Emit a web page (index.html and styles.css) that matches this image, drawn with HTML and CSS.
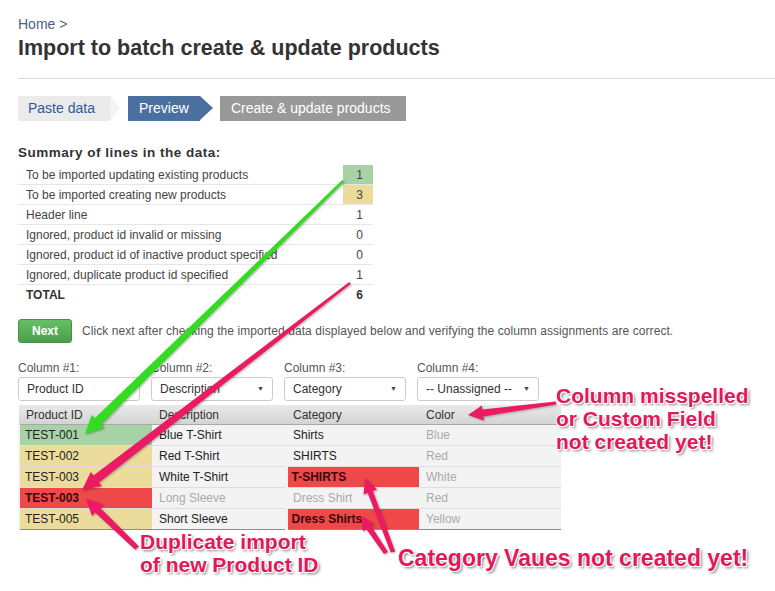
FILE: index.html
```html
<!DOCTYPE html>
<html lang="en">
<head>
    <meta charset="UTF-8">
    <meta name="viewport" content="width=device-width, initial-scale=1.0">
    <title>Import to batch create &amp; update products</title>
    <link rel="stylesheet" href="styles.css">
</head>
<body>
    <div class="page">
        <div class="crumb">Home &gt;</div>
        <h1>Import to batch create &amp; update products</h1>
        <hr>

        <div class="steps">
            <div class="step stepDone">Paste data</div>
            <div class="step stepCurrent">Preview</div>
            <div class="step stepNext">Create &amp; update products</div>
        </div>

        <h2>Summary of lines in the data:</h2>
        <table class="summary">
            <tr><td>To be imported updating existing products</td><td class="num okCell">1</td></tr>
            <tr><td>To be imported creating new products</td><td class="num newCell">3</td></tr>
            <tr><td>Header line</td><td class="num">1</td></tr>
            <tr><td>Ignored, product id invalid or missing</td><td class="num">0</td></tr>
            <tr><td>Ignored, product id of inactive product specified</td><td class="num">0</td></tr>
            <tr><td>Ignored, duplicate product id specified</td><td class="num">1</td></tr>
            <tr class="total"><td>TOTAL</td><td class="num">6</td></tr>
        </table>

        <div class="actions">
            <button class="nextBtn">Next</button>
            <span class="hint">Click next after checking the imported data displayed below and verifying the column assignments are correct.</span>
        </div>

        <div class="columns">
            <div class="colPick">
                <label>Column #1:</label>
                <div class="select">Product ID</div>
            </div>
            <div class="colPick">
                <label>Column #2:</label>
                <div class="select withCaret">Description</div>
            </div>
            <div class="colPick">
                <label>Column #3:</label>
                <div class="select withCaret">Category</div>
            </div>
            <div class="colPick">
                <label>Column #4:</label>
                <div class="select withCaret">-- Unassigned --</div>
            </div>
        </div>

        <table class="preview">
            <thead>
                <tr><th>Product ID</th><th>Description</th><th>Category</th><th>Color</th></tr>
            </thead>
            <tbody>
                <tr><td class="okCell">TEST-001</td><td>Blue T-Shirt</td><td>Shirts</td><td class="muted">Blue</td></tr>
                <tr><td class="newCell">TEST-002</td><td>Red T-Shirt</td><td>SHIRTS</td><td class="muted">Red</td></tr>
                <tr><td class="newCell">TEST-003</td><td>White T-Shirt</td><td class="badCell">T-SHIRTS</td><td class="muted">White</td></tr>
                <tr><td class="badCell">TEST-003</td><td class="muted">Long Sleeve</td><td class="muted">Dress Shirt</td><td class="muted">Red</td></tr>
                <tr><td class="newCell">TEST-005</td><td>Short Sleeve</td><td class="badCell">Dress Shirts</td><td class="muted">Yellow</td></tr>
            </tbody>
        </table>
    </div>

    <!-- annotation layer drawn over the screenshot -->
    <svg class="arrows" width="775" height="591" viewBox="0 0 775 591">
        <polygon class="arrowGreen" points="344,181.9 101,424.6 104.2,427.8 85,434 91.6,415 94.7,418.2 342.2,180.1"/>
        <polygon class="arrowPink" points="350.7,284 99,482.6 101.8,486.1 82,490 90.8,471.9 93.5,475.4 349.3,282"/>
        <polygon class="arrowPink" points="138.8,546.2 99.9,507.6 103,504.2 86,499 92,516 95.1,512.6 135.2,549.8"/>
        <polygon class="arrowPink" points="395.2,551.4 372.9,491 377.1,489.4 365,478 363.5,494.6 367.7,493 390.8,552.6"/>
        <polygon class="arrowPink" points="388,552.1 371.2,526 374.4,523.8 361,516 363.2,531.4 366.4,529.2 384,553.9"/>
        <polygon class="arrowPink" points="556.2,404.4 483.4,416.5 483.9,420.4 468,415 481.8,405.6 482.4,409.5 555.8,401.6"/>
    </svg>

    <div class="note noteColumn">Column misspelled<br>or Custom Field<br>not created yet!</div>
    <div class="note noteDuplicate">Duplicate import<br>of new Product ID</div>
    <div class="note noteCategory">Category Vaues not created yet!</div>
</body>
</html>
```

FILE: styles.css
```css
html, body {
    margin: 0;
    height: 100%;
    overflow: hidden;
    background: #fff;
}

body {
    font-family: "Liberation Sans", Arial, sans-serif;
    color: #333;
    position: relative;
}

.page {
    padding: 14px 0 0 18px;
}

.crumb {
    font-size: 14px;
    line-height: 20px;
    color: #4d6283;
}

h1 {
    margin: 0;
    font-size: 21.5px;
    line-height: 28px;
    font-weight: bold;
    color: #333;
}

hr {
    margin: 16px 0 0 0;
    border: none;
    border-top: 1px solid #ddd;
    height: 0;
}

/* wizard steps */
.steps {
    display: flex;
    margin-top: 17px;
    height: 25px;
}

.step {
    position: relative;
    height: 25px;
    line-height: 25px;
    font-size: 14px;
    padding-left: 11px;
    box-sizing: border-box;
}

.stepDone {
    width: 92px;
    margin-right: 18px;
    background: #ebebeb;
    color: #2d5b9a;
    padding-left: 10px;
}

.stepDone::after {
    content: "";
    position: absolute;
    left: 92px;
    top: 0;
    border-top: 12.5px solid transparent;
    border-bottom: 12.5px solid transparent;
    border-left: 10px solid #f3f3f3;
}

.stepCurrent {
    width: 72px;
    margin-right: 20px;
    background: #4a70a0;
    color: #fff;
}

.stepCurrent::after {
    content: "";
    position: absolute;
    left: 72px;
    top: 0;
    border-top: 12.5px solid transparent;
    border-bottom: 12.5px solid transparent;
    border-left: 13px solid #4a70a0;
}

.stepNext {
    width: 186px;
    background: #999;
    color: #fff;
}

h2 {
    margin: 23px 0 0 0;
    font-size: 13.5px;
    line-height: 18px;
    letter-spacing: 0.5px;
    font-weight: bold;
    color: #333;
}

/* summary of lines */
.summary {
    margin-top: 3px;
    width: 355px;
    border-collapse: collapse;
    font-size: 12px;
    color: #444;
}

.summary td {
    height: 19px;
    padding: 0 8px;
    border-bottom: 1px solid #e6e6e6;
}

.summary tr.total td {
    border-bottom: none;
    font-weight: bold;
    color: #333;
}

.summary .num {
    width: 30px;
    box-sizing: border-box;
    text-align: right;
    padding: 0 10px 0 0;
}

.okCell {
    background: #a7d2a6;
}

.newCell {
    background: #ecdc9c;
}

.badCell {
    background: #ee4848;
    font-weight: bold;
    color: #3a0808 !important;
}

/* next */
.actions {
    display: flex;
    align-items: center;
    margin-top: 15px;
    height: 24px;
}

.nextBtn {
    width: 54px;
    height: 24px;
    padding: 0;
    border: 1px solid #459245;
    border-radius: 3px;
    background: linear-gradient(#66bf66, #4c9e4c);
    color: #fff;
    font-family: "Liberation Sans", Arial, sans-serif;
    font-size: 12px;
    font-weight: bold;
}

.hint {
    margin-left: 10px;
    font-size: 12px;
    letter-spacing: 0.07px;
    color: #555;
}

/* column assignment */
.columns {
    display: flex;
    gap: 11px;
    margin-top: 17px;
}

.colPick {
    width: 122px;
    display: flex;
    flex-direction: column;
}

.colPick label {
    font-size: 12px;
    line-height: 16px;
    color: #555;
    margin-bottom: 1px;
}

.select {
    position: relative;
    height: 24px;
    line-height: 22px;
    box-sizing: border-box;
    border: 1px solid #ccc;
    border-radius: 3px;
    padding-left: 8px;
    font-size: 12px;
    color: #333;
    background: #fff;
}

.withCaret::after {
    content: "\25BC";
    position: absolute;
    right: 8px;
    top: 0;
    font-size: 7px;
    color: #444;
}

/* preview table */
.preview {
    margin-top: 4px;
    width: 543px;
    border-collapse: collapse;
    font-size: 12px;
    color: #222;
}

.preview th {
    height: 19px;
    padding: 0 7px;
    text-align: left;
    font-weight: normal;
    color: #333;
    background: linear-gradient(#e9e9e9, #d4d4d4);
    border-bottom: 1px solid #a9a9a9;
}

.preview th:nth-child(1),
.preview th:nth-child(3) {
    width: 133px;
    box-sizing: border-box;
}

.preview th:nth-child(2) {
    width: 134px;
    box-sizing: border-box;
}

.preview td {
    height: 20px;
    padding: 0 7px;
    background-color: #f3f3f3;
    border-bottom: 1px solid #dedede;
}

.preview tbody tr:last-child td {
    border-bottom: 1px solid #8c8c8c;
}

.preview td.okCell {
    background: #a7d2a6;
}

.preview td.newCell {
    background: #ecdc9c;
}

.preview td.badCell {
    background: #ee4848;
}

.preview td:first-child {
    border-left: 2px solid #f3f3f3;
    padding-left: 5px;
}

.preview td:nth-child(3).badCell {
    border-left: 3px solid #f3f3f3;
    padding-left: 4px;
}

.muted {
    color: #aaa;
}

/* annotations */
.arrows {
    position: absolute;
    left: 0;
    top: 0;
    pointer-events: none;
}

.arrowGreen {
    fill: #34dc21;
    filter: drop-shadow(1px 1px 1px rgba(0, 0, 0, 0.3));
}

.arrowPink {
    fill: #ec1a62;
    filter: drop-shadow(1px 1px 1px rgba(0, 0, 0, 0.3));
}

.note {
    position: absolute;
    font-family: "Liberation Sans", Arial, sans-serif;
    font-weight: bold;
    font-size: 21px;
    line-height: 23px;
    color: #e2185c;
    white-space: nowrap;
    text-shadow:
        -1px -1px 0 #fff, 1px -1px 0 #fff, -1px 1px 0 #fff, 1px 1px 0 #fff,
        2px 2px 3px rgba(0, 0, 0, 0.55);
}

.noteColumn {
    left: 556px;
    top: 384px;
}

.noteDuplicate {
    left: 140px;
    top: 530px;
}

.noteCategory {
    left: 398px;
    top: 546px;
    font-size: 23px;
    line-height: 25px;
}
```
